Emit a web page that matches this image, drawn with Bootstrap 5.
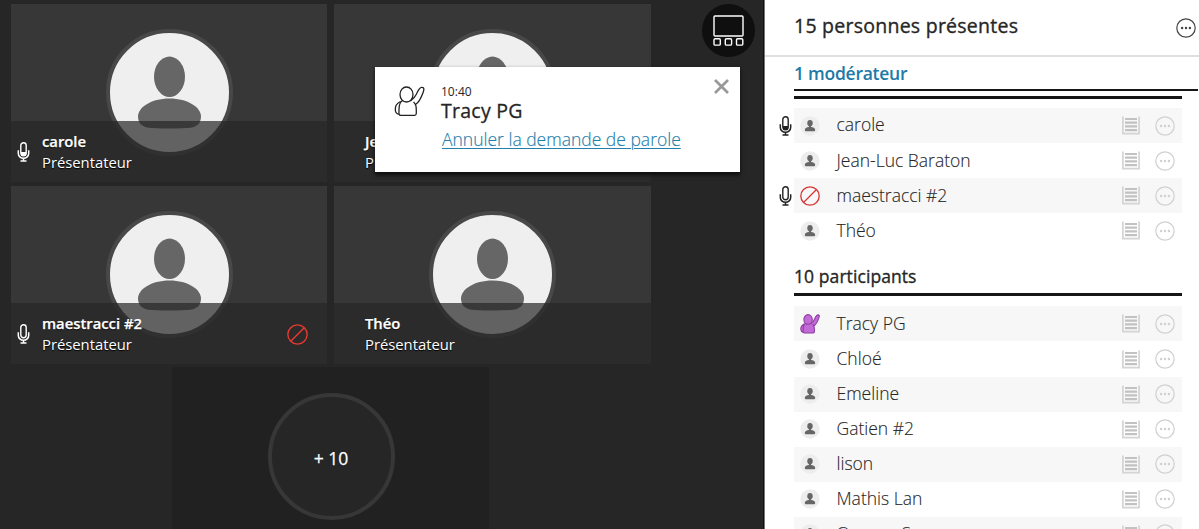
<!DOCTYPE html>
<html lang="fr">
<head>
<meta charset="utf-8">
<meta name="viewport" content="width=device-width, initial-scale=1">
<title>Participants</title>
<link rel="stylesheet" href="https://cdn.jsdelivr.net/npm/bootstrap@5.3.0/dist/css/bootstrap.min.css">
<style>
  body { font-family: "Open Sans", "Noto Sans", sans-serif; color: #262626; background: #fff; }
  svg { display: block; flex: none; }
  .stage { width: 765px; padding: 4px 0 0 11px; background: #262626; border-right: 1px solid #777; box-shadow: inset -1px 0 #111; }
  .tile-grid { width: 640px; column-gap: 7px; row-gap: 4px; }
  .tile { width: 316px; height: 178px; background: #373737; }
  .tile-r { width: 317px; }
  .tile-more { height: 178px; width: 317px; margin: -1px 0 0 161px; background: #212121; padding: 26px 0 0 1px; }
  .avatar { margin-top: 25px; }
  .caption-band { height: 61px; margin-top: -35px; background: rgba(38,38,38,.7); padding: 11px 19px 0 6px; color: #fff; font-size: 14.8px; line-height: 20px; text-shadow: 0 1px 1px #000; }
  .caption-name { font-weight: 600; margin-top: -1px; margin-bottom: 1px; -webkit-text-stroke: .25px #fff; }
  .mic-slot { width: 25px; padding-top: 10px; }
  .more-ring { width: 127px; height: 127px; border: 4px solid #373737; background: #262626; color: #fff; font-size: 17.5px; padding-top: 4px; -webkit-text-stroke: .25px #fff; }
  .view-btn { width: 53px; height: 53px; left: 702px; top: 4px; background: #0f0f0f; color: #fff; }
  .toast-box { left: 375px; top: 67px; width: 365px; height: 106px; background: #fff; padding: 17px 11px 0 19px; box-shadow: 0 2px 4px rgba(0,0,0,.7); border-bottom: 1px solid #111; }
  .toast-box a { display: block; color: #2480ab; font-size: 17.5px; font-weight: 300; line-height: 26px; margin: 4px 0 0 1px; text-underline-offset: 2px; text-decoration-thickness: 1px; white-space: nowrap; -webkit-text-stroke: .15px #2480ab; }
  .toast-time { font-size: 12px; line-height: 16px; }
  .toast-name { font-size: 19.5px; line-height: 22px; letter-spacing: .25px; -webkit-text-stroke: .3px #262626; }
  .side { width: 434px; }
  .side-head { height: 57px; border-bottom: 2px solid #dfdfdf; padding: 0 3px 4px 29px; }
  .side-title { font-size: 19.5px; letter-spacing: .25px; -webkit-text-stroke: .35px #262626; }
  .group-a { height: 34px; margin-left: 29px; margin-right: 1px; border-bottom: 2px solid #161616; color: #2079a6; font-size: 17.5px; line-height: 32px; font-weight: 600; letter-spacing: -.25px; }
  .rule { height: 3px; margin: 5px 17.5px 9px 29px; background: #161616; }
  .group-b { height: 48px; margin: 0 17.5px 10px 29px; padding-top: 15px; border-bottom: 3px solid #161616; font-size: 17.5px; line-height: 27px; letter-spacing: .08px; -webkit-text-stroke: .35px #262626; }
  .person { height: 35.1px; margin-right: 17.5px; }
  .person .mic-out { width: 29px; padding-left: 13.5px; }
  .line { background: #fff; padding: 0 7px 0 5.5px; font-size: 17.5px; font-weight: 300; color: #262626; }
  .person:nth-child(odd) .line { background: #f7f7f7; }
  .line .who { margin: -2px 0 0 17px; -webkit-text-stroke: .12px #262626; }
  .tools { gap: 15px; }
</style>
</head>
<body class="overflow-hidden">
<svg width="0" height="0" class="position-absolute">
  <symbol id="face" viewBox="0 0 127 127">
    <circle cx="63.5" cy="63.5" r="61.5" fill="#efefef" stroke="#484848" stroke-width="4"/>
    <ellipse cx="63.5" cy="47.800" rx="15.500" ry="20.200" fill="#666"/>
    <path d="M63.500 69.500C45 69.500 32 78.500 32 87.500C32 95 37 98 43 98.800C52 99.800 75 99.800 84 98.800C90 98 95 95 95 87.500C95 78.500 82 69.500 63.500 69.500Z" fill="#666"/>
  </symbol>
  <symbol id="mini" viewBox="0 0 20 20">
    <circle cx="10" cy="10" r="9.700" fill="#ededed"/>
    <ellipse cx="10" cy="7.200" rx="2.700" ry="3.100" fill="#666"/>
    <path d="M9 9.500h2v1.400c2.500.1 4.200 1.300 4.200 2.900 0 1-.6 1.500-1.500 1.500H6.300c-.9 0-1.500-.5-1.500-1.500 0-1.600 1.700-2.800 4.200-2.900Z" fill="#666"/>
  </symbol>
  <symbol id="mic" viewBox="0 0 12 20">
    <rect x="3.300" y=".8" width="5.400" height="13" rx="2.700" fill="none" stroke="currentColor" stroke-width="1.400"/>
    <path d="M.8 8.300V11.500a5.200 4.800 0 0 0 10.400 0V8.300M6 16.300V19M3 19.100H9" fill="none" stroke="currentColor" stroke-width="1.500"/>
  </symbol>
  <symbol id="ban" viewBox="0 0 20 20">
    <circle cx="10" cy="10" r="9.200" fill="none" stroke="currentColor" stroke-width="1.300"/><path d="M3.500 16.500 16.500 3.500" stroke="currentColor" stroke-width="1.300"/>
  </symbol>
  <symbol id="dots" viewBox="0 0 20 20">
    <circle cx="10" cy="10" r="9.200" fill="none" stroke="currentColor" stroke-width="1.200"/>
    <circle cx="6.100" cy="10" r="1.200" fill="currentColor"/><circle cx="10" cy="10" r="1.200" fill="currentColor"/><circle cx="13.900" cy="10" r="1.200" fill="currentColor"/>
  </symbol>
  <symbol id="note" viewBox="0 0 18 19">
    <path d="M.9 .5V17.700H17.100V.5" fill="none" stroke="#d4d4d4" stroke-width="1.700"/>
    <path d="M3 3H15M3 6.700H15M3 10.400H15M3 14.100H15" stroke="#c2c2c2" stroke-width="2.200"/>
  </symbol>
  <symbol id="hand" viewBox="0 0 31 31">
    <path d="M6.500 15.500C2.500 17.500 1 21 1.300 24C1.500 26.500 3 28 4.800 28.300" stroke="currentColor"/>
    <path d="M8.500 14.500C5.600 16 5 19.500 5 23.500C5 27 4.300 29.400 7 29.400H20.500C22.700 29.400 22.300 26.500 22.300 24.500C22.300 21.500 22.200 20 21.500 18.500C25 16.500 27.500 11 29.300 6C30.500 2.500 29.800 1.200 27.600 1.300C25 1.500 24 5 22.500 8C21.300 10.500 20 12.500 17 14.500Z" stroke="currentColor"/>
    <ellipse cx="12.500" cy="8.500" rx="6.500" ry="7.500" stroke="currentColor"/>
    <path d="M19.600 15.800 21.500 18.500" fill="none" stroke="currentColor"/>
  </symbol>
</svg>

<div class="d-flex vh-100 position-relative">
  <main class="stage flex-shrink-0 overflow-hidden">
    <div class="tile-grid d-flex flex-wrap">
      <section class="tile">
        <div class="d-flex justify-content-center"><svg class="avatar" width="127" height="127"><use href="#face"/></svg></div>
        <div class="caption-band d-flex position-relative">
          <div class="mic-slot"><svg width="13" height="20"><path d="M4 10h5v4H4z" fill="#fff"/><use href="#mic" width="13" height="20"/></svg></div>
          <div><div class="caption-name">carole</div><div>Présentateur</div></div>
        </div>
      </section>
      <section class="tile tile-r">
        <div class="d-flex justify-content-center"><svg class="avatar" width="127" height="127"><use href="#face"/></svg></div>
        <div class="caption-band d-flex position-relative">
          <div class="mic-slot"></div>
          <div><div class="caption-name">Jean-Luc Baraton</div><div>Présentateur</div></div>
        </div>
      </section>
      <section class="tile">
        <div class="d-flex justify-content-center"><svg class="avatar" width="127" height="127"><use href="#face"/></svg></div>
        <div class="caption-band d-flex position-relative">
          <div class="mic-slot"><svg width="13" height="20"><use href="#mic" width="13" height="20"/></svg></div>
          <div><div class="caption-name">maestracci #2</div><div>Présentateur</div></div>
          <svg class="ms-auto mt-2" width="21" height="25" style="color:#ee3831"><use href="#ban" y="2" width="21" height="21"/></svg>
        </div>
      </section>
      <section class="tile tile-r">
        <div class="d-flex justify-content-center"><svg class="avatar" width="127" height="127"><use href="#face"/></svg></div>
        <div class="caption-band d-flex position-relative">
          <div class="mic-slot"></div>
          <div><div class="caption-name">Théo</div><div>Présentateur</div></div>
        </div>
      </section>
      <section class="tile-more d-flex justify-content-center">
        <div class="more-ring rounded-circle d-flex align-items-center justify-content-center">+ 10</div>
      </section>
    </div>
  </main>

  <button class="view-btn position-absolute rounded-circle border-0 p-0 d-flex align-items-center justify-content-center" aria-label="Affichage">
    <svg width="31" height="31" fill="none" stroke="currentColor" stroke-width="1.400"><rect x="1" y="1" width="29" height="20" rx="1"/><rect x="1" y="23.800" width="6.300" height="6.300" rx="1.200"/><rect x="12.300" y="23.800" width="6.300" height="6.300" rx="1.200"/><rect x="23.500" y="23.800" width="6.300" height="6.300" rx="1.200"/></svg>
  </button>

  <div class="toast-box position-absolute d-flex" role="alert">
    <svg width="31" height="31" style="color:#222;margin-top:2px" fill="#fff" stroke-width="1.300"><use href="#hand"/></svg>
    <div style="margin-left:16px">
      <div class="toast-time">10:40</div>
      <div class="toast-name">Tracy PG</div>
      <a href="#">Annuler la demande de parole</a>
    </div>
    <svg class="ms-auto" width="15" height="15" viewBox="0 0 15 15" style="margin-top:-5px" stroke="#999" stroke-width="2.700"><path d="M1 1 14 14M14 1 1 14"/></svg>
  </div>

  <aside class="side flex-shrink-0 overflow-hidden">
    <header class="side-head d-flex align-items-center justify-content-between">
      <div class="side-title">15 personnes présentes</div>
      <svg width="20" height="20" class="mt-1" style="color:#444"><use href="#dots"/></svg>
    </header>
    <div class="group-a">1 modérateur</div>
    <div class="rule"></div>
    <div id="presenters"></div>
    <div class="group-b">10 participants</div>
    <div id="participants"></div>
  </aside>
</div>
<script src="https://cdn.jsdelivr.net/npm/bootstrap@5.3.0/dist/js/bootstrap.bundle.min.js"></script>
<script>
  const icon = {
    mini: '<svg width="20" height="20"><use href="#mini"/></svg>',
    ban: '<svg width="20" height="20" style="color:#d93434"><use href="#ban"/></svg>',
    hand: '<svg width="20" height="20" viewBox="0 0 31 31" style="color:#8b3da0" fill="#c26bd6" stroke-width="1.700"><use href="#hand" width="31" height="31"/></svg>'
  };
  function row([name, kind, mic]) {
    const level = mic === 'on' ? '<path d="M4 10h5v4H4z" fill="#222"/>' : '';
    const m = mic ? `<svg width="13" height="20" style="color:#222">${level}<use href="#mic" width="13" height="20"/></svg>` : '';
    return `<div class="person d-flex"><div class="mic-out d-flex align-items-center flex-shrink-0">${m}</div>
      <div class="line d-flex align-items-center flex-fill">${icon[kind]}<span class="who">${name}</span>
      <div class="tools d-flex align-items-center ms-auto"><svg width="18" height="19"><use href="#note"/></svg><svg width="20" height="20" style="color:#d0d0d0"><use href="#dots"/></svg></div></div></div>`;
  }
  presenters.innerHTML = [['carole','mini','on'],['Jean-Luc Baraton','mini'],['maestracci #2','ban','off'],['Théo','mini']].map(row).join('');
  participants.innerHTML = [['Tracy PG','hand'],['Chloé','mini'],['Emeline','mini'],['Gatien #2','mini'],['lison','mini'],['Mathis Lan','mini'],['Oceane S','mini']].map(row).join('');
</script>
</body>
</html>
